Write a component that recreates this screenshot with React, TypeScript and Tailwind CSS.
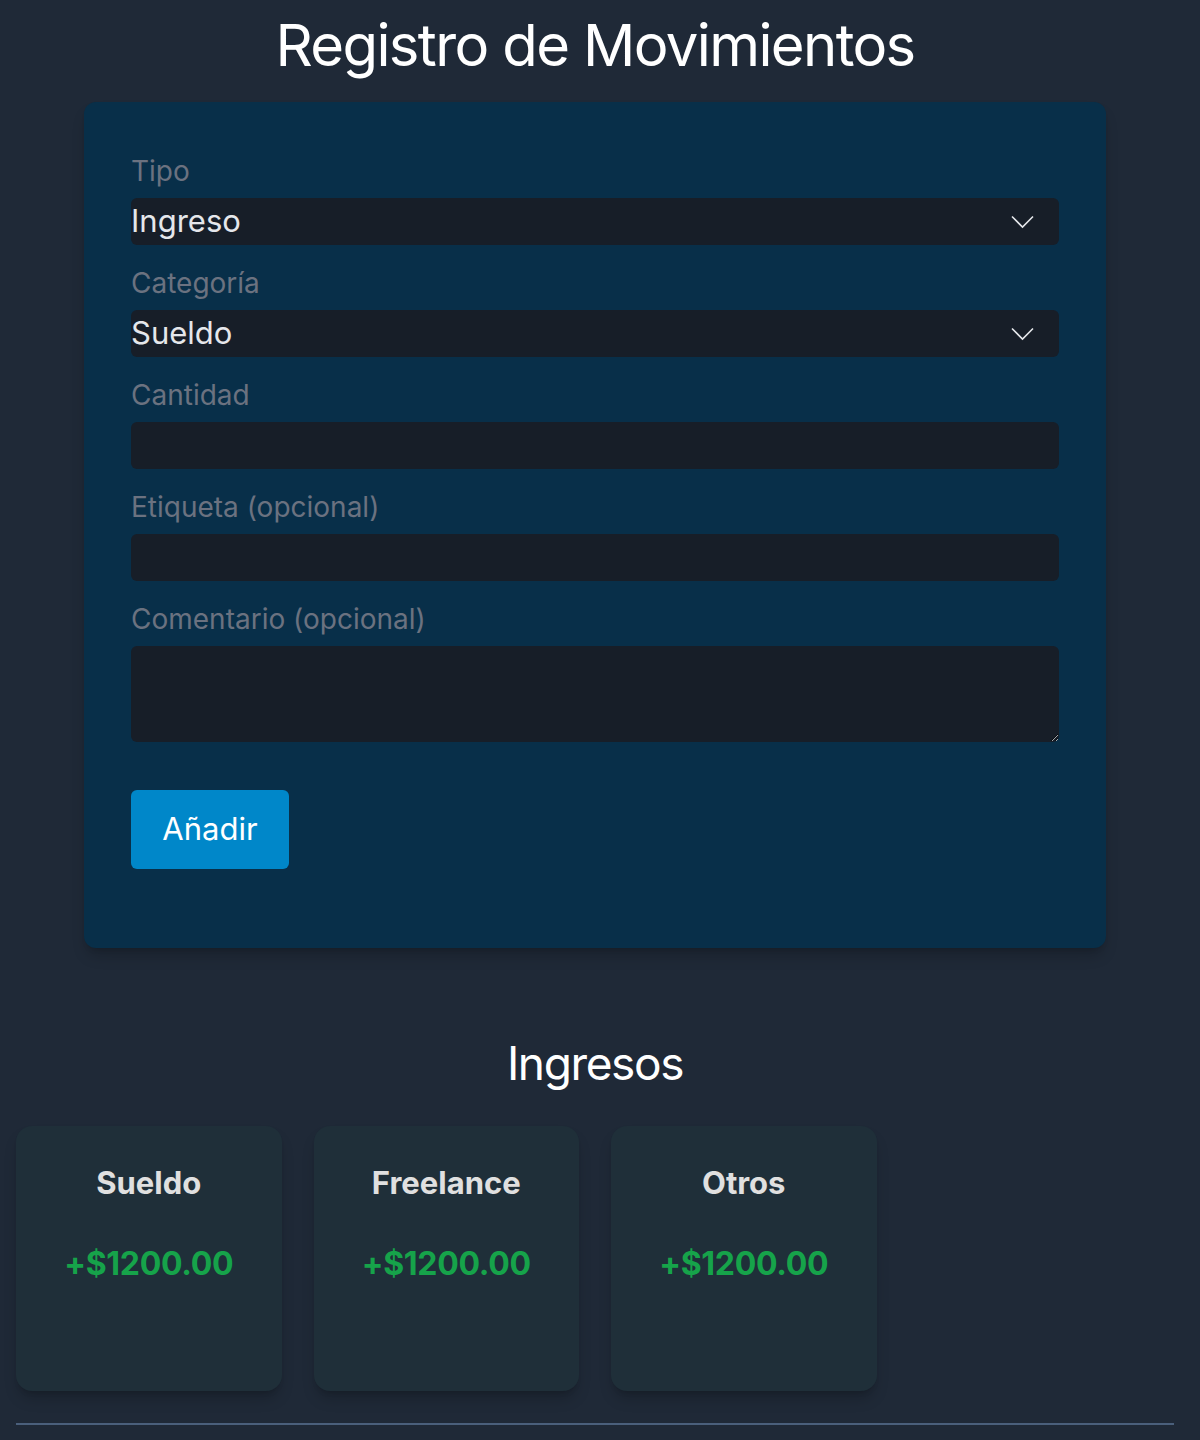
import type { ReactNode } from 'react'

const ingresos = [
  { id: 1, categoria: 'Sueldo', cantidad: 1200 },
  { id: 2, categoria: 'Freelance', cantidad: 1200 },
  { id: 3, categoria: 'Otros', cantidad: 1200 },
]

function Chevron() {
  return (
    <svg width="23" height="14" viewBox="0 0 23 14" fill="none" className="pointer-events-none absolute right-[25px] top-1/2 -translate-y-1/2">
      <polyline points="1,1.5 11.5,12 22,1.5" stroke="#e5e7eb" strokeWidth="1.6" />
    </svg>
  )
}

function Field({ label, children }: { label: string; children: ReactNode }) {
  return (
    <div className="mb-[23px]">
      <label className="block h-[30px] leading-[30px] mb-3 text-[28px] text-[#6b7280]">{label}</label>
      {children}
    </div>
  )
}

export default function App() {
  return (
    <div className="min-h-[1440px] bg-[#1f2937] font-['Inter',sans-serif]">
      <div className="w-[1190px] px-4">
        <h1 className="h-[90px] leading-[90px] mb-3 text-center text-[58px] tracking-[-0.028em] text-white">Registro de Movimientos</h1>

        <div className="mx-auto w-[1022px] rounded-xl bg-[#082f49] px-[47px] pt-[54px] pb-[79px] shadow-lg shadow-black/20">
          <Field label="Tipo">
            <div className="relative">
              <select defaultValue="Ingreso" className="block h-[47px] w-full appearance-none rounded-md bg-[#171e28] text-[31px] text-[#e5e7eb] outline-none">
                <option>Ingreso</option>
                <option>Gasto</option>
              </select>
              <Chevron />
            </div>
          </Field>
          <Field label="Categoría">
            <div className="relative">
              <select defaultValue="Sueldo" className="block h-[47px] w-full appearance-none rounded-md bg-[#171e28] text-[31px] text-[#e5e7eb] outline-none">
                <option>Sueldo</option>
                <option>Freelance</option>
                <option>Otros</option>
              </select>
              <Chevron />
            </div>
          </Field>
          <Field label="Cantidad">
            <input type="number" className="block h-[47px] w-full rounded-md bg-[#171e28] text-[31px] text-[#e5e7eb] outline-none" />
          </Field>
          <Field label="Etiqueta (opcional)">
            <input type="text" className="block h-[47px] w-full rounded-md bg-[#171e28] text-[31px] text-[#e5e7eb] outline-none" />
          </Field>
          <div>
            <label className="block h-[30px] leading-[30px] mb-3 text-[28px] text-[#6b7280]">Comentario (opcional)</label>
            <textarea className="block h-[96px] w-full resize-y rounded-md bg-[#171e28] text-[31px] text-[#e5e7eb] outline-none [color-scheme:dark]" />
          </div>
          <button className="mt-[48px] h-[79px] w-[158px] rounded-md bg-[#0087c9] text-[31px] text-white">Añadir</button>
        </div>

        <h2 className="mt-[85px] h-[60px] leading-[60px] mb-[33px] text-center text-[46px] tracking-[-0.03em] text-white">Ingresos</h2>

        <div className="grid grid-cols-4 gap-8">
          {ingresos.map((i) => (
            <div key={i.id} className="h-[265px] rounded-2xl bg-[#1f2f39] pt-[34px] text-center shadow-lg shadow-black/20">
              <div className="text-[31px] font-bold text-[#e0e0e0]">{i.categoria}</div>
              <div className="mt-[33px] text-[32px] font-bold tracking-[-0.01em] text-[#16a34a]">+${i.cantidad.toFixed(2)}</div>
            </div>
          ))}
        </div>

        <hr className="mt-[32px] border-0 h-[2px] bg-[#4a5f7b]" />
      </div>
    </div>
  )
}
